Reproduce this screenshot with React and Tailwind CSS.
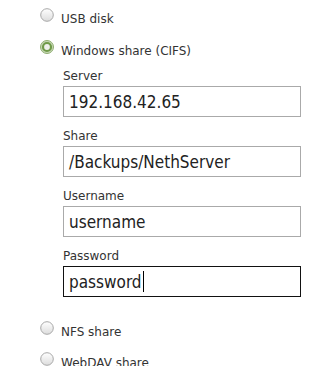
import React from "react";

function Radio({ checked }) {
  return (
    <svg width="14" height="14" viewBox="0 0 14 14" className="shrink-0">
      <defs>
        <linearGradient id={checked ? "gc" : "gu"} x1="0" y1="0" x2="0" y2="1">
          <stop offset="0" stopColor="#ffffff" />
          <stop offset="1" stopColor="#dcdcdc" />
        </linearGradient>
      </defs>
      {checked ? (
        <>
          <circle cx="7" cy="7" r="6.5" fill="#c9d8b8" stroke="#8fae70" strokeWidth="1" />
          <circle cx="7" cy="7" r="4" fill="#eef0ea" stroke="#6f9a48" strokeWidth="2.2" />
        </>
      ) : (
        <circle cx="7" cy="7" r="6.3" fill="url(#gu)" stroke="#a8a8a8" strokeWidth="1" />
      )}
    </svg>
  );
}

function RadioRow({ label, checked, h }) {
  return (
    <div className={`flex items-start ${h}`}>
      <Radio checked={checked} />
      <span className="ml-[7px] mt-[4px] text-[12px] leading-[14px] text-[#333333]">{label}</span>
    </div>
  );
}

function Field({ label, value, focused, first }) {
  return (
    <div className={first ? "" : "mt-[12px]"}>
      <div className="text-[12px] leading-[14px] text-[#333333]">{label}</div>
      <div
        className={`mt-[3px] h-[31px] flex items-center pl-[5px] border ${
          focused ? "border-[#111111]" : "border-[#aaaaaa]"
        } bg-white`}
      >
        <span
          className="text-[17px] leading-[20px] text-[#222222]"
          style={{ fontFamily: '"DejaVu Sans Condensed", "DejaVu Sans", sans-serif', fontStretch: "condensed" }}
        >
          {value}
        </span>
        {focused && <span className="ml-[1px] w-[1px] h-[21px] bg-black" />}
      </div>
    </div>
  );
}

export default function App() {
  return (
    <div
      className="w-[334px] h-[366px] overflow-hidden bg-white pt-[8px] pl-[40px]"
      style={{ fontFamily: '"DejaVu Sans", sans-serif' }}
    >
      <RadioRow label="USB disk" h="h-[32px]" />
      <RadioRow label="Windows share (CIFS)" checked h="h-[29px]" />
      <div className="ml-[23px] w-[238px]">
        <Field first label="Server" value="192.168.42.65" />
        <Field label="Share" value="/Backups/NethServer" />
        <Field label="Username" value="username" />
        <Field label="Password" value="password" focused />
      </div>
      <div className="mt-[24px]">
        <RadioRow label="NFS share" h="h-[31px]" />
        <RadioRow label="WebDAV share" h="h-[31px]" />
      </div>
    </div>
  );
}
